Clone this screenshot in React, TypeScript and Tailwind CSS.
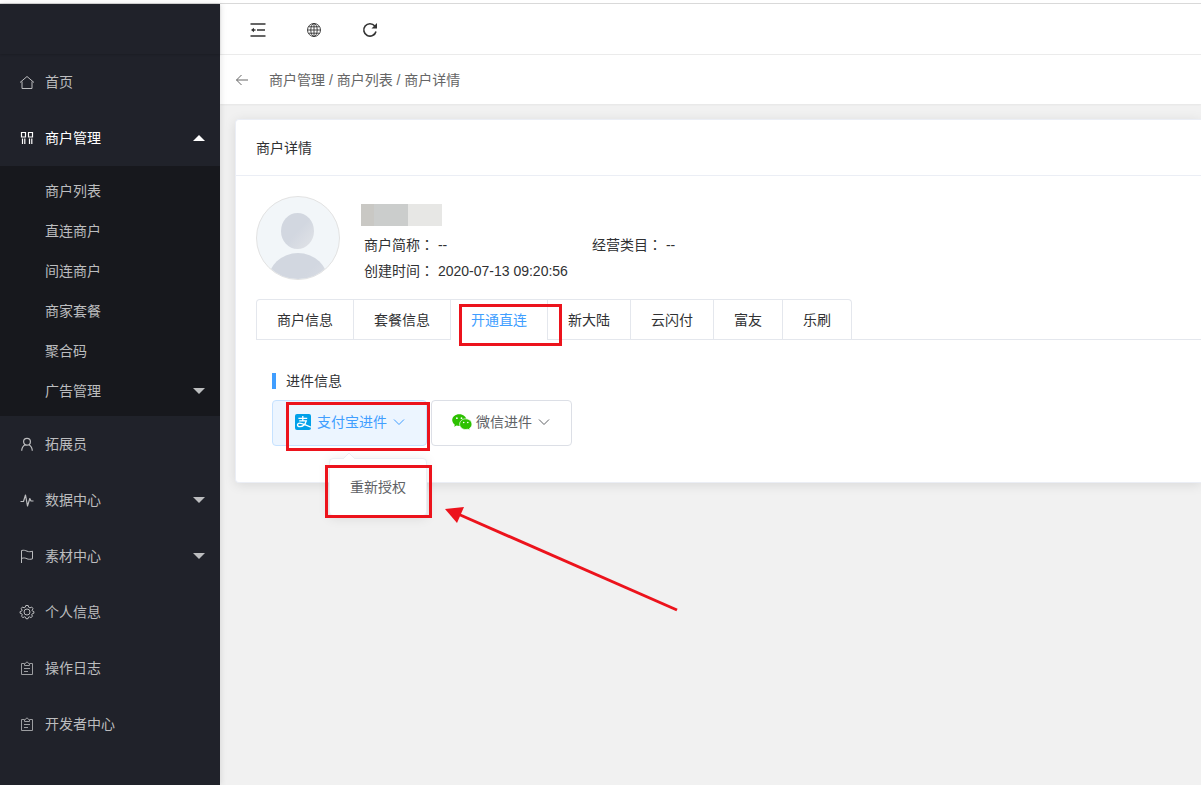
import { ReactNode } from "react";

const iconProps = {
  viewBox: "0 0 16 16",
  fill: "none",
  stroke: "currentColor",
  strokeWidth: 1,
};

const HomeIcon = () => (
  <svg {...iconProps} className="size-4">
    <path d="M1 8.5 L8 2.5 L15 8.5 M3 7.5 V14.5 H13 V7.5" />
  </svg>
);

const ShopIcon = () => (
  <svg {...iconProps} className="size-4">
    <path d="M2.5 2.5 h4 v4.5 h-4z M9.5 2.5 h4 v4.5 h-4z" strokeWidth="1.2" />
    <path d="M3.5 8.5 V14 M5.8 8.5 V14 M10.5 8.5 V14 M12.8 8.5 V14" strokeWidth="1.2" />
  </svg>
);

const UserIcon = () => (
  <svg {...iconProps} strokeWidth={1.2} className="size-4">
    <circle cx="8" cy="5.8" r="3.4" />
    <path d="M6 8.8 C4 10 2.8 12 2.7 14.8 M10 8.8 C12 10 13.2 12 13.3 14.8" />
  </svg>
);

const PulseIcon = () => (
  <svg {...iconProps} strokeWidth={1.2} className="size-4">
    <path d="M1.5 9.5 H4.5 L6.5 3 L8.5 14 L10.8 6.5 L12 9 H14.5" strokeLinejoin="round" />
  </svg>
);

const FlagIcon = () => (
  <svg {...iconProps} className="size-4">
    <path d="M2.5 15 V2.5 C5 1.8 6.5 2.6 8 3.2 C10 4 11.5 3.8 13.5 3.2 V10.8 C11.5 11.5 9.5 11.4 8 10.8 C6.5 10 5 9.6 2.5 10.4" />
  </svg>
);

const GearIcon = () => (
  <svg {...iconProps} className="size-4">
    <circle cx="8" cy="8" r="3" />
    <path
      d="M6.8 1.5 H9.2 L9.7 3.3 L11 3.9 L12.7 3 L14 4.7 L13.1 6.4 L13.3 7 L14.9 7.6 V9.2 L13.2 9.8 L12.7 10.8 L13.5 12.3 L11.9 13.6 L10.4 12.8 L9.6 13.1 L9 14.7 H7 L6.4 13.1 L5.5 12.8 L4 13.6 L2.5 12.3 L3.3 10.8 L2.8 9.8 L1.1 9.2 V7.6 L2.8 7 L3.1 6.2 L2.2 4.6 L3.5 3 L5.1 3.8 L6.2 3.3 Z"
      strokeLinejoin="round"
    />
  </svg>
);

const NoteIcon = () => (
  <svg {...iconProps} className="size-4 opacity-80">
    <path d="M5 3.5 H2.5 V14.5 H13.5 V3.5 H11" />
    <path d="M5.5 5.5 V3.5 H6.5 C6.8 1.6 9.2 1.6 9.5 3.5 H10.5 V5.5 Z M5 8.5 H11 M5 11.5 H9" />
  </svg>
);

const CollapseIcon = () => (
  <svg {...iconProps} strokeWidth={1.4} className="size-4">
    <path d="M0.5 2 H15.5 M7 8 H15 M0.5 14 H15.5" />
    <path d="M1 8 L4 5.8 V10.2 Z" fill="currentColor" stroke="none" />
    <path d="M3 8 H5.5" />
  </svg>
);

const GlobeIcon = () => (
  <svg {...iconProps} strokeWidth={0.9} className="size-4">
    <circle cx="8" cy="8" r="6.5" />
    <ellipse cx="8" cy="8" rx="3.2" ry="6.5" />
    <path d="M8 1.5 V14.5 M1.5 8 H14.5 M2.5 4.8 H13.5 M2.5 11.2 H13.5" />
  </svg>
);

const RefreshIcon = () => (
  <svg {...iconProps} strokeWidth={1.6} className="size-4">
    <path d="M12.8 4 A6.2 6.2 0 1 0 14 9.5" />
    <path d="M15 1 V6.5 H9.5 Z" fill="currentColor" stroke="none" />
  </svg>
);

const BackIcon = () => (
  <svg {...iconProps} viewBox="0 0 14 14" className="size-3.5">
    <path d="M1.5 7 H13 M6.5 2 L1.5 7 L6.5 12" />
  </svg>
);

const ChevronIcon = () => (
  <svg {...iconProps} viewBox="0 0 14 14" className="size-3.5">
    <path d="M2 4.5 L7 9.5 L12 4.5" />
  </svg>
);

const AlipayIcon = () => (
  <svg viewBox="0 0 16 16" className="size-4">
    <rect width="16" height="16" rx="2" fill="#00a0e9" />
    <path
      d="M3.4 4.3 H12.2 M7.8 2 V6.8 M4.2 6.8 H11.3 C10.5 9.6 8.4 12.6 5 12.6 C1.7 12.6 1.8 9.2 4.7 9.2 C7.6 9.2 10.5 11.4 16 13.2"
      fill="none"
      stroke="#fff"
      strokeWidth="1.3"
    />
  </svg>
);

const WechatIcon = () => (
  <svg viewBox="0 0 20 18" className="h-[18px] w-5">
    <path d="M7.3 1.2 C3.3 1.2 0.2 3.8 0.2 7.1 C0.2 9 1.2 10.6 2.8 11.7 L2.2 13.8 L4.6 12.6 C5.5 12.9 6.4 13 7.3 13 C11.2 13 14.4 10.4 14.4 7.1 C14.4 3.8 11.2 1.2 7.3 1.2 Z" fill="#2dc100" />
    <path d="M13.8 5.8 C10.4 5.8 7.6 8.2 7.6 11.2 C7.6 14.2 10.4 16.5 13.8 16.5 C14.6 16.5 15.3 16.4 16 16.2 L18 17.3 L17.5 15.4 C19 14.4 19.9 12.9 19.9 11.2 C19.9 8.2 17.1 5.8 13.8 5.8 Z" fill="#2dc100" stroke="#fff" strokeWidth="0.7" />
    <g fill="#fff">
      <circle cx="4.9" cy="5.2" r="0.9" />
      <circle cx="9.5" cy="5.2" r="0.9" />
      <circle cx="11.7" cy="9.5" r="0.8" />
      <circle cx="15.8" cy="9.5" r="0.8" />
    </g>
  </svg>
);

const Avatar = () => (
  <svg viewBox="0 0 84 84" className="size-[84px] shrink-0">
    <defs>
      <linearGradient id="avatar-fill" x1="0" y1="0" x2="1" y2="1">
        <stop offset="0.5" stopColor="#d2d7e0" />
        <stop offset="1" stopColor="#e2e4e8" />
      </linearGradient>
      <clipPath id="avatar-clip">
        <circle cx="42" cy="42" r="41" />
      </clipPath>
    </defs>
    <circle cx="42" cy="42" r="41.5" fill="#f2f6f9" stroke="#e2e2e2" />
    <ellipse cx="41.5" cy="35" rx="16.5" ry="18" fill="url(#avatar-fill)" />
    <ellipse cx="42" cy="85" rx="30" ry="28" fill="url(#avatar-fill)" clipPath="url(#avatar-clip)" />
  </svg>
);

const Caret = ({ up }: { up?: boolean }) => (
  <svg viewBox="0 0 12 6" className="ml-auto h-1.5 w-3" fill="currentColor">
    <path d={up ? "M0 6 L6 0 L12 6 Z" : "M0 0 H12 L6 6 Z"} />
  </svg>
);

type MenuItem = {
  label: string;
  icon: ReactNode;
  children?: { label: string; expandable?: boolean }[];
  expandable?: boolean;
};

const menu: MenuItem[] = [
  { label: "首页", icon: <HomeIcon /> },
  {
    label: "商户管理",
    icon: <ShopIcon />,
    children: [
      { label: "商户列表" },
      { label: "直连商户" },
      { label: "间连商户" },
      { label: "商家套餐" },
      { label: "聚合码" },
      { label: "广告管理", expandable: true },
    ],
  },
  { label: "拓展员", icon: <UserIcon /> },
  { label: "数据中心", icon: <PulseIcon />, expandable: true },
  { label: "素材中心", icon: <FlagIcon />, expandable: true },
  { label: "个人信息", icon: <GearIcon /> },
  { label: "操作日志", icon: <NoteIcon /> },
  { label: "开发者中心", icon: <NoteIcon /> },
];

const tabs = ["商户信息", "套餐信息", "开通直连", "新大陆", "云闪付", "富友", "乐刷"];

function Sidebar() {
  return (
    <aside className="z-10 w-[220px] shrink-0 bg-[#20222a] text-[#bcbdbf] shadow-[1px_0_6px_rgba(0,0,0,0.1)]">
      <div className="h-[50px] shadow-[0_1px_2px_rgba(0,0,0,0.15)]" />
      <nav>
        {menu.map((item) => (
          <div key={item.label}>
            <a
              href="#"
              className={
                item.children
                  ? "flex h-14 items-center pr-[15px] pl-[19px] text-white"
                  : "flex h-14 items-center pr-[15px] pl-[19px]"
              }
            >
              {item.icon}
              <span className="ml-2.5">{item.label}</span>
              {item.children && <Caret up />}
              {item.expandable && <Caret />}
            </a>
            {item.children && (
              <div className="bg-[#17181d] py-[5px]">
                {item.children.map((child) => (
                  <a
                    key={child.label}
                    href="#"
                    className="flex h-10 items-center pr-[15px] pl-[45px]"
                  >
                    {child.label}
                    {child.expandable && <Caret />}
                  </a>
                ))}
              </div>
            )}
          </div>
        ))}
      </nav>
    </aside>
  );
}

function Field({ label, value }: { label: string; value: string }) {
  return (
    <p className="h-[26px] w-[228px] leading-[26px]">
      {label}
      <span className="font-['Noto_Sans_CJK_TC',sans-serif] leading-none">：</span> {value}
    </p>
  );
}

// red frame drawn around the element the guide points at
function Frame({ className }: { className: string }) {
  return (
    <span className={`pointer-events-none absolute z-20 border-3 border-[#ec131c] ${className}`} />
  );
}

function AuthMenu() {
  return (
    <div className="absolute top-[58px] left-[57px] z-10">
      <div className="relative rounded border border-[#ebeef5] bg-white py-2.5 shadow-[0_2px_12px_rgba(0,0,0,0.1)]">
        <svg viewBox="0 0 12 6" className="absolute -top-1.5 left-[13px] h-1.5 w-3">
          <path d="M0 6 L6 0 L12 6" fill="#fff" stroke="#ebeef5" />
        </svg>
        <button className="block px-5 leading-9 whitespace-nowrap text-[#606266]">重新授权</button>
      </div>
      <Frame className="top-[7px] left-[-4px] h-[53px] w-[107px]" />
      <svg
        viewBox="0 0 236 106"
        className="pointer-events-none absolute top-12 left-[115px] h-[106px] w-[236px] max-w-none"
      >
        <path d="M14 8 L233 104" stroke="#ec131c" strokeWidth="3" />
        <path d="M1 3 L20 1 L13 17 Z" fill="#ec131c" />
      </svg>
    </div>
  );
}

function MerchantCard() {
  return (
    <section className="ml-[15px] rounded-l border border-r-0 border-[#ebeef5] bg-white shadow-[0_2px_12px_rgba(0,0,0,0.1)]">
      <h1 className="border-b border-[#ebeef5] px-5 pt-0.5 leading-[53px]">商户详情</h1>
      <div className="pt-5 pb-9 pl-5">
        <div className="flex">
          <Avatar />
          <div className="ml-[21px] pt-2">
            <div className="flex h-[22px]">
              <span className="w-[13px] bg-[#c9c8c4]" />
              <span className="w-[34px] bg-[#cbcdcc]" />
              <span className="w-[34px] bg-[#e7e7e5]" />
            </div>
            <div className="mt-1.5 flex flex-wrap pl-[3px]">
              <Field label="商户简称" value="--" />
              <Field label="经营类目" value="--" />
              <div className="w-full">
                <Field label="创建时间" value="2020-07-13 09:20:56" />
              </div>
            </div>
          </div>
        </div>

        <div className="mt-[15px] flex" role="tablist">
          <div className="flex h-[41px] rounded-t border-x border-t border-[#e4e7ed]">
            {tabs.map((tab) => (
              <button
                key={tab}
                role="tab"
                aria-selected={tab === "开通直连"}
                className={
                  tab === "开通直连"
                    ? "relative border-l border-[#e4e7ed] px-5 text-[#409eff]"
                    : "border-b border-l border-[#e4e7ed] px-5 first:border-l-0"
                }
              >
                {tab}
                {tab === "开通直连" && <Frame className="top-1 left-2 h-[42px] w-[103px]" />}
              </button>
            ))}
          </div>
          <div className="flex-1 border-b border-[#e4e7ed]" />
        </div>

        <div className="pt-[33px] pl-4">
          <h2 className="border-l-4 border-[#409eff] pl-2.5 leading-4">进件信息</h2>
          <div className="mt-[11px] flex gap-1">
            <div className="relative">
              <button className="flex h-[46px] items-center rounded border border-[#c6e2ff] bg-[#ecf5ff] px-5 pb-0.5 text-[#409eff]">
                <span className="flex w-5 justify-center">
                  <AlipayIcon />
                </span>
                <span className="mr-[5px] ml-1">支付宝进件</span>
                <ChevronIcon />
              </button>
              <Frame className="top-0.5 left-3.5 h-[49px] w-36" />
              <AuthMenu />
            </div>
            <button className="flex h-[46px] items-center rounded border border-[#dcdfe6] bg-white px-5 pb-0.5 text-[#606266]">
              <WechatIcon />
              <span className="mr-[5px] ml-1">微信进件</span>
              <ChevronIcon />
            </button>
          </div>
        </div>
      </div>
    </section>
  );
}

export default function App() {
  return (
    <div className="flex min-h-screen flex-col overflow-hidden bg-white pt-[3px] font-['Liberation_Sans','Noto_Sans_CJK_SC',sans-serif] text-sm text-[#303133]">
      <div className="h-px bg-[#d9d9d9]" />
      <div className="flex flex-1">
        <Sidebar />
        <main className="min-w-0 flex-1 bg-[#f1f1f1]">
          <header className="flex h-[51px] items-center border-b border-[#ebebeb] bg-white pt-0.5 pl-2.5 text-[#333]">
            <button aria-label="收起菜单" className="flex w-14 justify-center">
              <CollapseIcon />
            </button>
            <button aria-label="语言" className="flex w-14 justify-center">
              <GlobeIcon />
            </button>
            <button aria-label="刷新" className="flex w-14 justify-center">
              <RefreshIcon />
            </button>
          </header>
          <div className="mb-[15px] flex h-[49px] items-center bg-white pl-[15px] text-[#666] shadow-[0_1px_2px_rgba(0,0,0,0.05)]">
            <button aria-label="返回">
              <BackIcon />
            </button>
            <nav className="ml-5">
              <a href="#">商户管理</a> / <a href="#">商户列表</a> / <a href="#">商户详情</a>
            </nav>
          </div>
          <MerchantCard />
        </main>
      </div>
    </div>
  );
}
